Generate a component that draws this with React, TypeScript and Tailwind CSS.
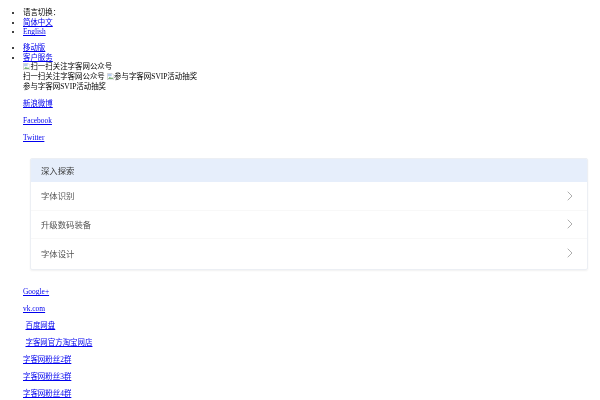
import React from 'react'
import { ChevronRight } from 'lucide-react'

const serif = { fontFamily: '"Liberation Serif", "Noto Sans CJK SC", serif' }

const BrokenImage = () => (
  <svg width="7.4" height="7.4" viewBox="0 0 16 16" className="inline-block align-[-1px]">
    <path d="M1 1h10l4 4v10H1z" fill="#fff" stroke="#b5b5b5" strokeWidth="1.2" />
    <path d="M2 13l4-5 3 3 2-2 3 4z" fill="#7fb27b" />
    <path d="M2 2h8v5H2z" fill="#b8cdf0" />
  </svg>
)

const Link = ({ children }: { children: React.ReactNode }) => (
  <a href="#" className="text-[#0000ee] underline">{children}</a>
)

const exploreItems = ['字体识别', '升级数码装备', '字体设计']

export default function App() {
  return (
    <div className="w-[600px] h-[400px] overflow-hidden bg-white text-[7.45px] leading-[9.6px] text-black blur-[0.3px]" style={serif}>
      <ul className="list-disc pl-[23px] pt-[8px]">
        <li>语言切换：</li>
        <li><Link>简体中文</Link></li>
        <li><Link>English</Link></li>
      </ul>
      <ul className="list-disc pl-[23px] mt-[6.5px]">
        <li><Link>移动版</Link></li>
        <li>
          <Link>客户服务</Link>
          <div><BrokenImage />扫一扫关注字客网公众号</div>
          <div>扫一扫关注字客网公众号 <BrokenImage />参与字客网SVIP活动抽奖</div>
          <div>参与字客网SVIP活动抽奖</div>
          <p className="mt-[7.6px]"><Link>新浪微博</Link></p>
          <p className="mt-[7.4px]"><Link>Facebook</Link></p>
          <p className="mt-[7.4px]"><Link>Twitter</Link></p>
        </li>
      </ul>

      <div className="ml-[30px] mr-3 mt-[16px] h-[112px] rounded-[2px] border border-[#eceff4] shadow-[0_1px_2px_rgba(0,0,0,0.06)] overflow-hidden font-['Noto_Sans_CJK_SC',sans-serif]">
        <div className="h-[23px] bg-[#e6eefb] pl-[10px] flex items-center text-[8.4px] text-[#333]">深入探索</div>
        {exploreItems.map(item => (
          <div key={item} className="h-[28.4px] pl-[10px] pr-[9px] flex items-center justify-between border-b border-[#f8f8f8] text-[8.4px] text-[#555] last:border-b-0">
            <span>{item}</span>
            <ChevronRight size={16} strokeWidth={1.2} className="text-[#999]" />
          </div>
        ))}
      </div>

      <div className="pl-[23px] mt-[17px]">
        <p><Link>Google+</Link></p>
        <p className="mt-[7px]"><Link>vk.com</Link></p>
        <p className="mt-[7px] pl-[2.5px]"><Link>百度网盘</Link></p>
        <p className="mt-[7.4px] pl-[2.5px]"><Link>字客网官方淘宝网店</Link></p>
        <p className="mt-[7.4px]"><Link>字客网粉丝2群</Link></p>
        <p className="mt-[7.4px]"><Link>字客网粉丝3群</Link></p>
        <p className="mt-[7.4px]"><Link>字客网粉丝4群</Link></p>
      </div>
    </div>
  )
}
